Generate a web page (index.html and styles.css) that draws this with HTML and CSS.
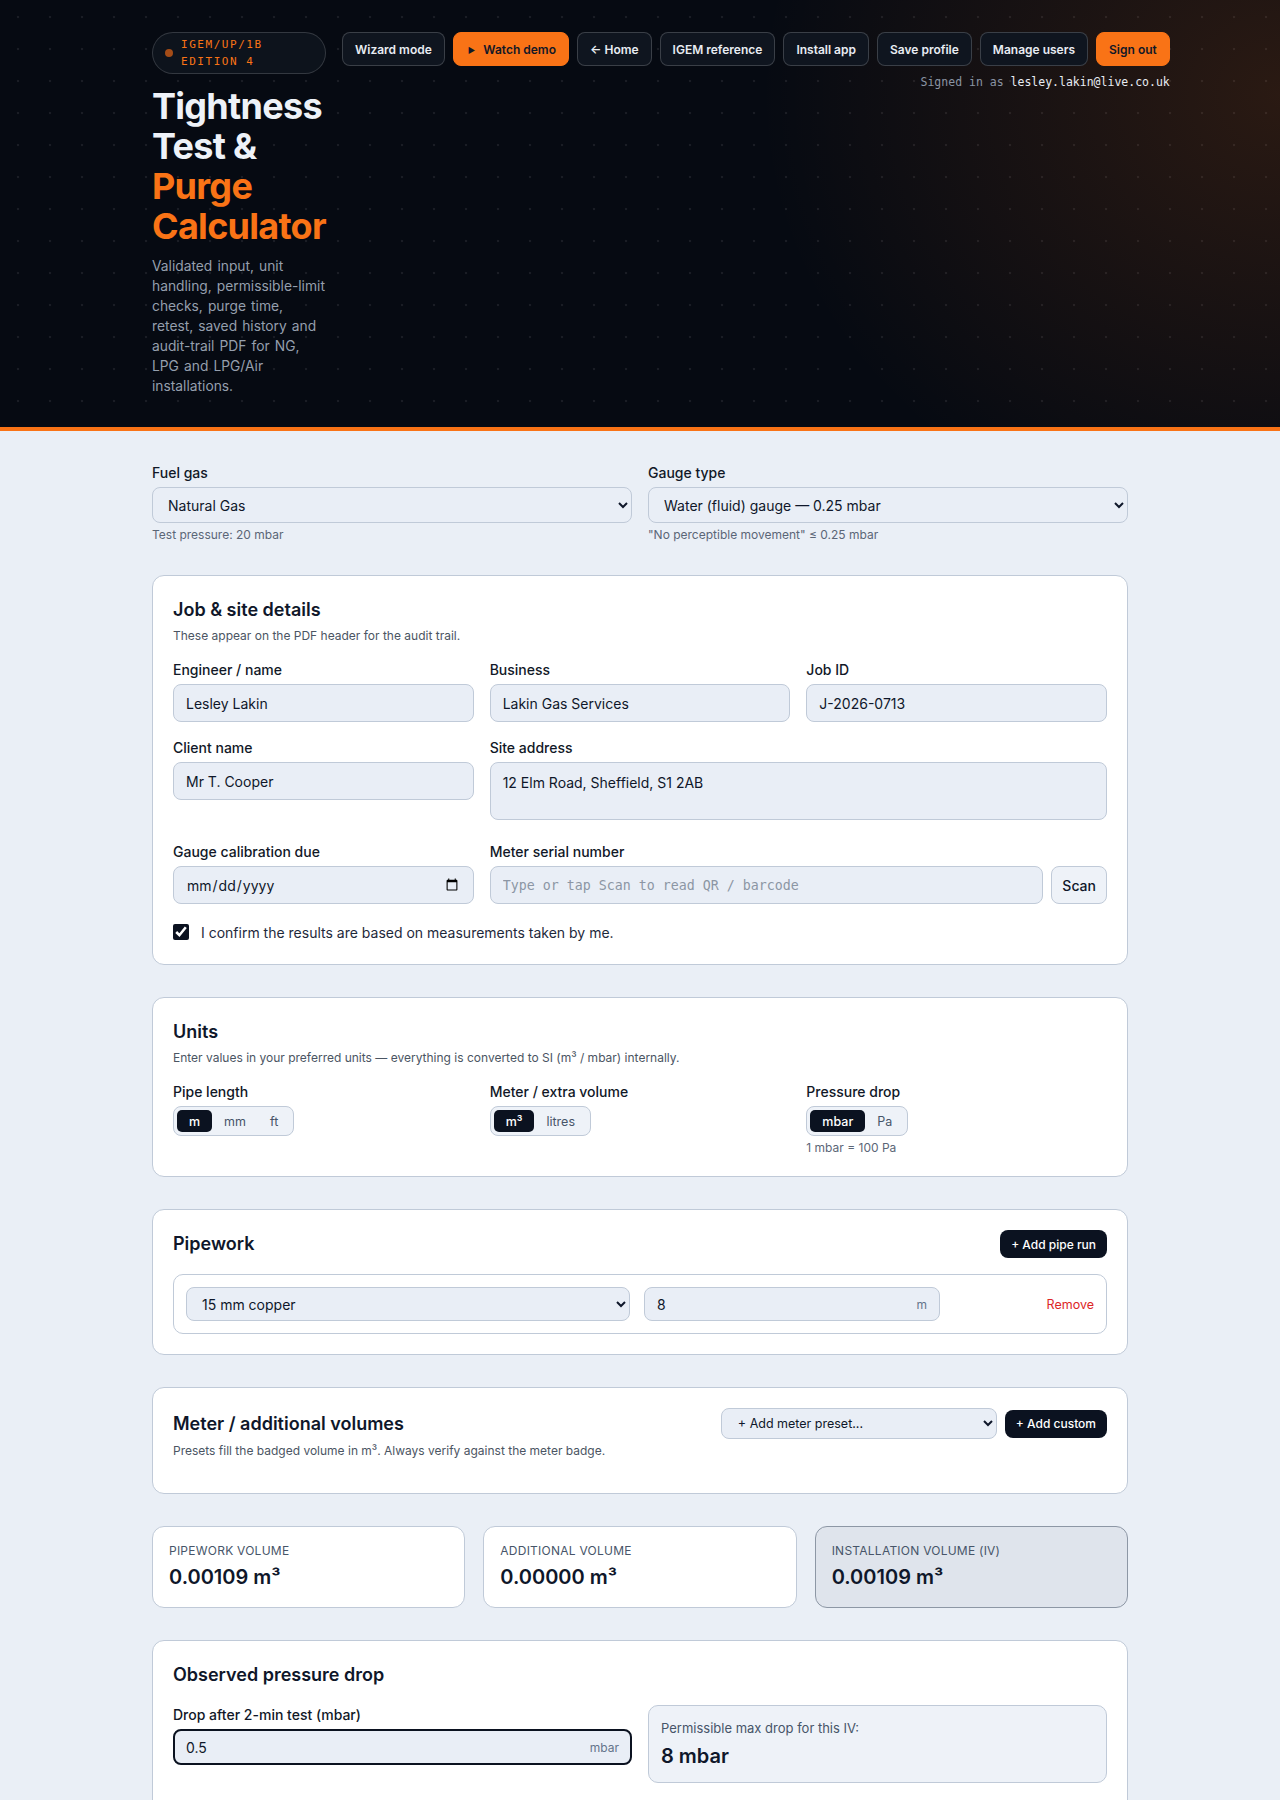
FILE: index.html
```html
<!doctype html>
<html lang="en">
  <head>
    <meta charset="utf-8">
    <title>Tightness Test &amp; Purge Calculator</title>
    <link rel="stylesheet" href="styles.css">
  </head>
  <body>
    <header class="hero">
      <div class="wrap hero_row">
        <div class="hero_text">
          <div class="edition"><span class="edition_dot"></span><span>IGEM/UP/1B EDITION 4</span></div>
          <h1>Tightness Test &amp; <span class="accent">Purge Calculator</span></h1>
          <p>Validated input, unit handling, permissible-limit checks, purge time, retest, saved history and audit-trail PDF for NG, LPG and LPG/Air installations.</p>
        </div>
        <div class="hero_nav">
          <div class="nav_btns">
            <button class="nav_btn">Wizard mode</button>
            <button class="nav_btn orange"><span class="play">&#9654;</span>Watch demo</button>
            <button class="nav_btn">&larr; Home</button>
            <button class="nav_btn">IGEM reference</button>
            <button class="nav_btn">Install app</button>
            <button class="nav_btn">Save profile</button>
            <button class="nav_btn">Manage users</button>
            <button class="nav_btn orange">Sign out</button>
          </div>
          <div class="signed">Signed in as <span>lesley.lakin@live.co.uk</span></div>
        </div>
      </div>
    </header>

    <main class="wrap main">
      <div class="grid2">
        <div class="field">
          <label>Fuel gas</label>
          <select class="ctrl sel"><option>Natural Gas</option></select>
          <div class="hint">Test pressure: 20 mbar</div>
        </div>
        <div class="field">
          <label>Gauge type</label>
          <select class="ctrl sel"><option>Water (fluid) gauge — 0.25 mbar</option></select>
          <div class="hint">"No perceptible movement" ≤ 0.25 mbar</div>
        </div>
      </div>

      <section class="card">
        <h2>Job &amp; site details</h2>
        <p class="sub">These appear on the PDF header for the audit trail.</p>
        <div class="grid3">
          <div class="field">
            <label>Engineer / name</label>
            <input class="ctrl" type="text" value="Lesley Lakin">
          </div>
          <div class="field">
            <label>Business</label>
            <input class="ctrl" type="text" value="Lakin Gas Services">
          </div>
          <div class="field">
            <label>Job ID</label>
            <input class="ctrl" type="text" value="J-2026-0713">
          </div>
          <div class="field">
            <label>Client name</label>
            <input class="ctrl" type="text" value="Mr T. Cooper">
          </div>
          <div class="field span2">
            <label>Site address</label>
            <textarea class="ctrl area">12 Elm Road, Sheffield, S1 2AB</textarea>
          </div>
          <div class="field">
            <label>Gauge calibration due</label>
            <input class="ctrl" type="date">
          </div>
          <div class="field span2">
            <label>Meter serial number</label>
            <div class="serial_row">
              <input class="ctrl mono" type="text" placeholder="Type or tap Scan to read QR / barcode">
              <button class="scan_btn">Scan</button>
            </div>
          </div>
        </div>
        <label class="confirm"><input type="checkbox" checked> I confirm the results are based on measurements taken by me.</label>
      </section>

      <section class="card">
        <h2>Units</h2>
        <p class="sub">Enter values in your preferred units — everything is converted to SI (m³ / mbar) internally.</p>
        <div class="grid3">
          <div class="field">
            <label>Pipe length</label>
            <div class="seg"><button class="on">m</button><button>mm</button><button>ft</button></div>
          </div>
          <div class="field">
            <label>Meter / extra volume</label>
            <div class="seg"><button class="on">m³</button><button>litres</button></div>
          </div>
          <div class="field">
            <label>Pressure drop</label>
            <div class="seg"><button class="on">mbar</button><button>Pa</button></div>
            <div class="hint">1 mbar = 100 Pa</div>
          </div>
        </div>
      </section>

      <section class="card">
        <div class="card_head">
          <h2>Pipework</h2>
          <button class="dark_btn">+ Add pipe run</button>
        </div>
        <div class="pipe_row">
          <select class="ctrl sel small"><option>15 mm copper</option></select>
          <div class="ctrl suffix_box small">
            <input type="text" value="8">
            <span>m</span>
          </div>
          <a class="remove">Remove</a>
        </div>
      </section>

      <section class="card">
        <div class="card_head">
          <h2>Meter / additional volumes</h2>
          <div class="head_tools">
            <select class="ctrl preset"><option>+ Add meter preset...</option></select>
            <button class="dark_btn">+ Add custom</button>
          </div>
        </div>
        <p class="sub">Presets fill the badged volume in m³. Always verify against the meter badge.</p>
        <div class="meter_list"></div>
      </section>

      <div class="stats">
        <div class="stat">
          <div class="stat_label">Pipework volume</div>
          <div class="stat_value">0.00109 m³</div>
        </div>
        <div class="stat">
          <div class="stat_label">Additional volume</div>
          <div class="stat_value">0.00000 m³</div>
        </div>
        <div class="stat total">
          <div class="stat_label">Installation volume (IV)</div>
          <div class="stat_value">0.00109 m³</div>
        </div>
      </div>

      <section class="card">
        <h2>Observed pressure drop</h2>
        <div class="grid2 drop_grid">
          <div class="field">
            <label>Drop after 2-min test (mbar)</label>
            <div class="ctrl suffix_box focus">
              <input type="text" value="0.5">
              <span>mbar</span>
            </div>
          </div>
          <div class="limit_box">
            <div class="limit_label">Permissible max drop for this IV:</div>
            <div class="limit_value">8 mbar</div>
          </div>
        </div>
        <div class="verdict_space"></div>
      </section>
    </main>
  </body>
</html>
```

FILE: styles.css
```css
body {
  margin: 0;
  font-family: Inter, "Noto Sans", sans-serif;
  background-color: #eaeff6;
  color: #0f172a;
}

.wrap {
  max-width: 976px;
  margin: 0 auto;
}

/* header */
.hero {
  background-color: #060a12;
  background-image:
    radial-gradient(ellipse 520px 460px at 100% 22%, rgba(249, 115, 22, 0.15), transparent 100%),
    radial-gradient(circle, rgba(255, 255, 255, 0.08) 1px, transparent 1.6px);
  background-size: 100% 100%, 32px 32px;
  background-position: 0 0, 2px 1px;
  border-bottom: 4px solid #f97316;
  padding: 32px 0 31px;
}
.hero_row {
  display: flex;
  gap: 16px;
  align-items: flex-start;
}
.hero_text {
  flex: none;
  width: 174px;
}
.edition {
  display: inline-flex;
  align-items: center;
  gap: 8px;
  padding: 3px 16px 3px 12px;
  border: 1px solid rgba(255, 255, 255, 0.16);
  border-radius: 22px;
  background-color: #0d131c;
  font-family: "DejaVu Sans Mono", monospace;
  font-size: 11px;
  line-height: 17px;
  letter-spacing: 0.14em;
  color: #f97316;
}
.edition_dot {
  flex: none;
  width: 8px;
  height: 8px;
  border-radius: 50%;
  background-color: #a44c17;
}
.hero h1 {
  margin: 12px 0 0;
  font-size: 36px;
  line-height: 40px;
  font-weight: 700;
  letter-spacing: -0.02em;
  color: #eef2f8;
}
.accent {
  color: #f97316;
}
.hero p {
  margin: 10px 0 0;
  width: 175px;
  font-size: 13.8px;
  word-spacing: 1.2px;
  line-height: 20px;
  color: #959fad;
}
.hero_nav {
  flex: none;
  display: flex;
  flex-direction: column;
  align-items: flex-end;
}
.nav_btns {
  display: flex;
  gap: 8px;
}
.nav_btn {
  height: 34px;
  padding: 0 12px;
  border: 1px solid rgba(255, 255, 255, 0.18);
  border-radius: 8px;
  background-color: #0f151f;
  color: #e8ecf2;
  font-family: Inter, sans-serif;
  font-size: 12px;
  font-weight: 600;
  white-space: nowrap;
}
.nav_btn.orange {
  background-color: #f97316;
  border-color: #f97316;
  color: #111827;
}
.play {
  font-size: 8px;
  margin: 0 8px 0 2px;
  vertical-align: 1px;
}
.signed {
  margin-top: 8px;
  font-family: "DejaVu Sans Mono", monospace;
  font-size: 11.5px;
  line-height: 16px;
  color: #8a94a3;
}
.signed span {
  color: #e8ecf2;
}

/* main */
.main {
  padding: 32px 0 40px;
}
.grid2 {
  display: grid;
  grid-template-columns: 1fr 1fr;
  gap: 16px;
}
.grid3 {
  display: grid;
  grid-template-columns: 1fr 1fr 1fr;
  gap: 16px;
  margin-top: 16px;
}
.span2 {
  grid-column: span 2;
}
.field label {
  display: block;
  font-size: 14px;
  font-weight: 500;
  line-height: 20px;
  margin-bottom: 4px;
  color: #111827;
}
.hint {
  margin-top: 4px;
  font-size: 12px;
  line-height: 16px;
  color: #5b6677;
}

.ctrl {
  box-sizing: border-box;
  width: 100%;
  height: 38px;
  padding: 0 12px;
  border: 1px solid #c0cad8;
  border-radius: 8px;
  background-color: #e9eef6;
  font-family: Inter, sans-serif;
  font-size: 14px;
  color: #0f172a;
}
.ctrl.sel {
  height: 36px;
  padding: 0 11px;
}
.ctrl.area {
  display: block;
  height: 58px;
  padding: 10px 12px;
  line-height: 20px;
  resize: none;
  margin-bottom: 6px;
}
.ctrl.mono {
  font-family: "DejaVu Sans Mono", monospace;
  font-size: 13.3px;
}
.ctrl.mono::placeholder {
  color: #8c96a4;
}
.serial_row {
  display: flex;
  gap: 8px;
}
.scan_btn {
  flex: none;
  height: 38px;
  padding: 0 10px;
  border: 1px solid #c0cad8;
  border-radius: 8px;
  background-color: #eef2f8;
  font-family: Inter, sans-serif;
  font-size: 14px;
  font-weight: 500;
  color: #0f172a;
}
.confirm {
  display: flex;
  align-items: center;
  gap: 12px;
  margin-top: 16px;
  min-height: 24px;
  font-size: 14px;
  color: #1e293b;
}
.confirm input {
  margin: 0;
  width: 16px;
  height: 16px;
  accent-color: #0b1220;
}

/* cards */
.card {
  margin-top: 32px;
  padding: 20px;
  border: 1px solid #c0cad8;
  border-radius: 12px;
  background-color: #fff;
}
.card h2 {
  margin: 0;
  font-size: 18px;
  line-height: 28px;
  font-weight: 600;
  color: #0f172a;
}
.sub {
  margin: 4px 0 0;
  font-size: 12px;
  line-height: 16px;
  color: #4b5563;
}
.card_head {
  display: flex;
  justify-content: space-between;
  align-items: center;
}
.head_tools {
  display: flex;
  gap: 8px;
  align-items: center;
}
.dark_btn {
  height: 28px;
  padding: 0 11px;
  border: none;
  border-radius: 8px;
  background-color: #0b1220;
  color: #fff;
  font-family: Inter, sans-serif;
  font-size: 12px;
  font-weight: 500;
}

.seg {
  display: inline-flex;
  padding: 3px;
  border: 1px solid #c0cad8;
  border-radius: 8px;
  background-color: #eef2f8;
}
.seg button {
  height: 22px;
  padding: 0 12px;
  border: none;
  border-radius: 5px;
  background: none;
  font-family: Inter, sans-serif;
  font-size: 12.5px;
  color: #475569;
}
.seg button.on {
  background-color: #0b1220;
  color: #fff;
  font-weight: 500;
}

.pipe_row {
  display: grid;
  grid-template-columns: 3fr 2fr 140px;
  gap: 14px;
  align-items: center;
  margin-top: 16px;
  padding: 12px;
  border: 1px solid #c0cad8;
  border-radius: 10px;
}
.ctrl.small {
  height: 34px;
  font-size: 14px;
}
.suffix_box {
  display: flex;
  align-items: center;
}
.suffix_box input {
  flex: 1;
  min-width: 0;
  border: none;
  background: none;
  padding: 0;
  font-family: Inter, sans-serif;
  font-size: 14px;
  color: #0f172a;
  outline: none;
}
.suffix_box span {
  font-size: 12px;
  color: #64748b;
}
.remove {
  justify-self: end;
  font-size: 12.5px;
  color: #dc2626;
}

.ctrl.preset {
  width: 276px;
  height: 31px;
  font-size: 12.5px;
}
.meter_list {
  min-height: 14px;
}

.stats {
  display: grid;
  grid-template-columns: repeat(3, 1fr);
  gap: 18px;
  margin-top: 32px;
}
.stat {
  padding: 16px;
  border: 1px solid #c0cad8;
  border-radius: 12px;
  background-color: #fff;
}
.stat.total {
  background-color: #dfe4ec;
  border-color: #8d97a5;
}
.stat_label {
  font-size: 12px;
  line-height: 16px;
  letter-spacing: 0.02em;
  text-transform: uppercase;
  color: #475569;
}
.stat_value {
  margin-top: 4px;
  font-size: 20px;
  line-height: 28px;
  font-weight: 600;
  color: #0f172a;
}

.drop_grid {
  margin-top: 16px;
}
.suffix_box.focus {
  height: 36px;
  border: 2px solid #0b1220;
  padding: 0 11px;
}
.suffix_box.focus input {
  font-size: 14px;
}
.limit_box {
  padding: 12px;
  border: 1px solid #c0cad8;
  border-radius: 10px;
  background-color: #eef2f8;
}
.limit_label {
  font-size: 13px;
  line-height: 20px;
  color: #475569;
}
.limit_value {
  margin-top: 4px;
  font-size: 20px;
  line-height: 28px;
  font-weight: 600;
  color: #0f172a;
}
.verdict_space {
  height: 60px;
}
```
